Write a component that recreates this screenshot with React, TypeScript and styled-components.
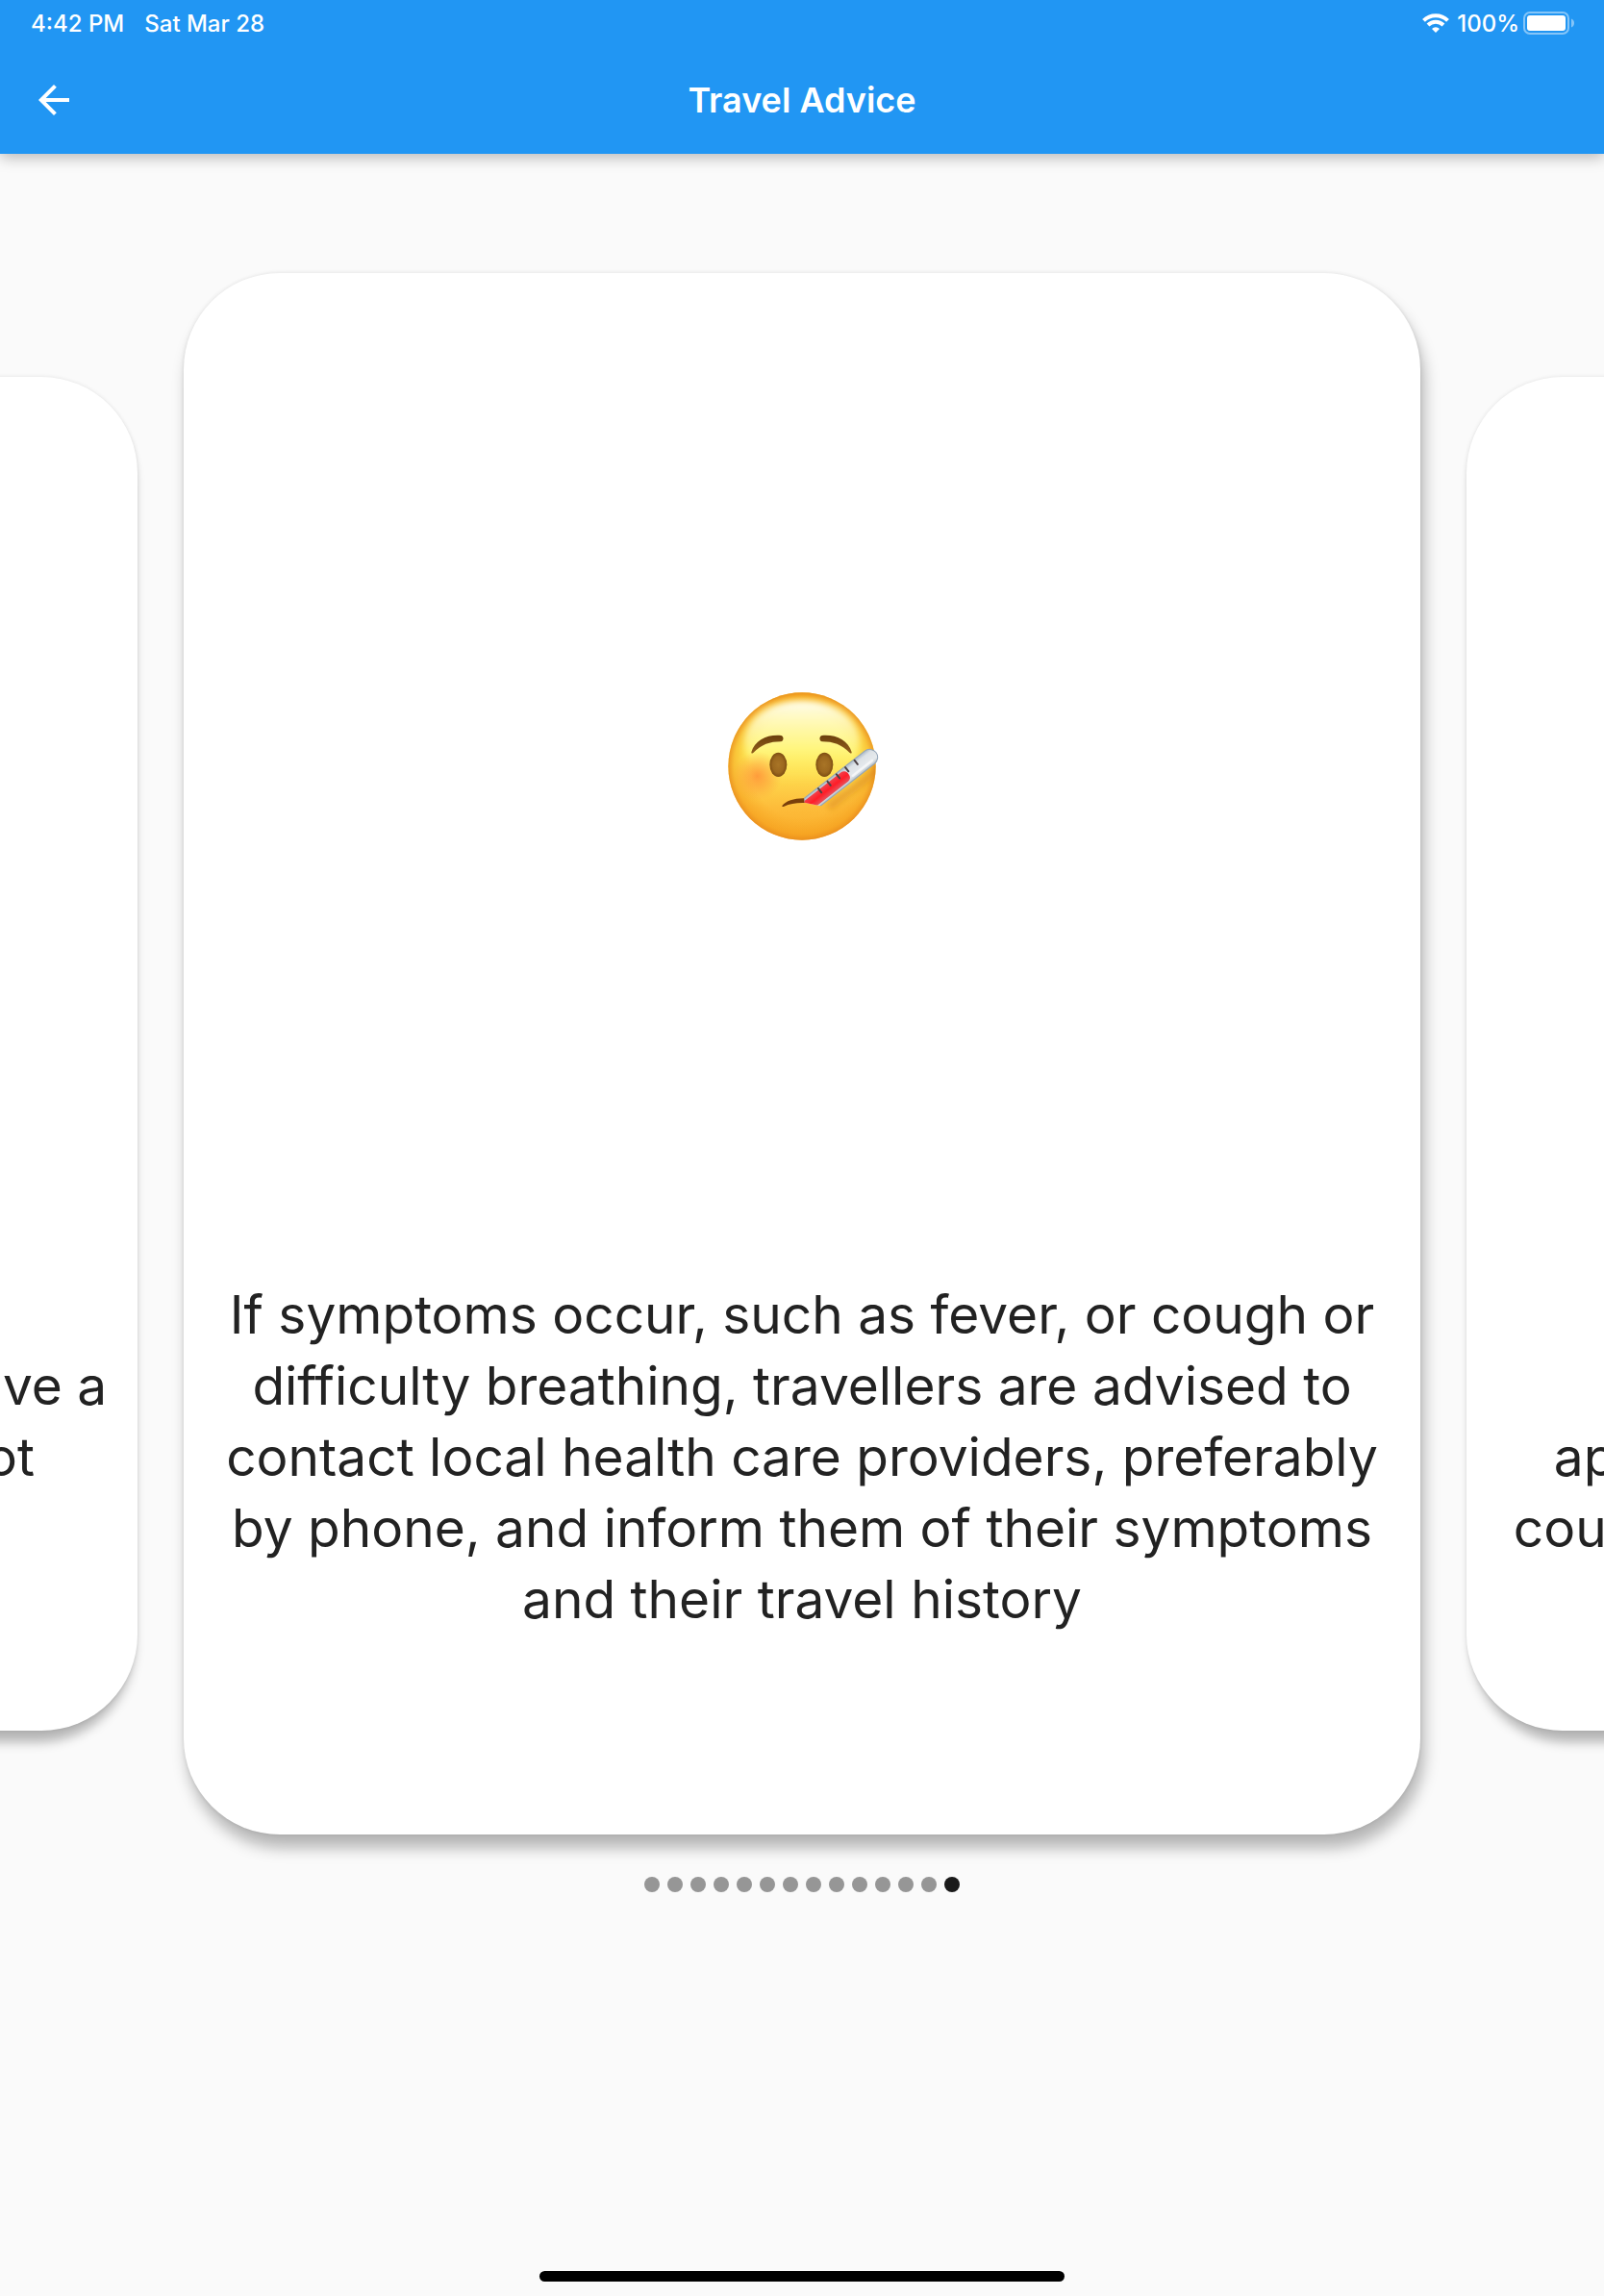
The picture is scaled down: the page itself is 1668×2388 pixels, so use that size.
import React, { useState } from "react";
import styled, { createGlobalStyle } from "styled-components";
import { MdArrowBack } from "react-icons/md";

const GlobalStyle = createGlobalStyle`
  *, *::before, *::after { box-sizing: border-box; }
  body {
    margin: 0;
    background: #fafafa;
    color: #222;
    font-family: Inter, "Liberation Sans", sans-serif;
  }
`;

const Page = styled.div`
  display: flex;
  flex-direction: column;
  min-height: 100vh;
  overflow-x: clip;
`;

const Header = styled.header`
  background: #2196f3;
  color: #fff;
  box-shadow: 0 4px 14px rgba(0, 0, 0, 0.26);
`;

const StatusBar = styled.div`
  display: flex;
  align-items: center;
  justify-content: space-between;
  height: 48px;
  padding: 0 30px 0 32px;
  font-size: 24px;
  font-weight: 500;
`;

const StatusGroup = styled.div<{ $gap: number }>`
  display: flex;
  align-items: center;
  gap: ${({ $gap }) => $gap}px;
`;

const AppBar = styled.div`
  display: grid;
  grid-template-columns: 112px 1fr 112px;
  align-items: center;
  height: 112px;
`;

const BackButton = styled.button`
  display: grid;
  place-items: center;
  width: 112px;
  height: 112px;
  padding: 0;
  border: 0;
  background: none;
  color: inherit;
  font-size: 48px;
  cursor: pointer;
`;

const Title = styled.h1`
  margin: 0;
  font-size: 36px;
  font-weight: 600;
  text-align: center;
`;

const Main = styled.main`
  display: flex;
  flex: 1;
  flex-direction: column;
  gap: 44px;
  padding-top: 124px;
`;

const Carousel = styled.section`
  display: flex;
  justify-content: center;
  gap: 48px;
  min-height: 68vh;
`;

type Side = "previous" | "current" | "next";

const shadows: Record<Side, string> = {
  previous: "-4px 12px 12px rgba(0, 0, 0, 0.28)",
  current: "4px 14px 16px rgba(0, 0, 0, 0.28)",
  next: "6px 12px 12px rgba(0, 0, 0, 0.28)",
};

const Card = styled.article<{ $side: Side }>`
  display: grid;
  flex: 0 0 calc(80% - 48px);
  grid-template-rows: 775px minmax(534px, auto);
  align-content: center;
  gap: 64px;
  margin: ${({ $side }) => ($side === "current" ? "0" : "108px 0")};
  padding: 0 24px;
  border-radius: 100px;
  background: #fff;
  box-shadow: ${({ $side }) => shadows[$side]}, 0 0 4px rgba(0, 0, 0, 0.1);
`;

const Artwork = styled.div`
  display: grid;
  place-items: center;
`;

const Advice = styled.p`
  align-self: center;
  margin: 0;
  font-size: 55px;
  line-height: 74px;
  text-align: center;
  white-space: pre-line;
`;

const Dots = styled.nav`
  display: flex;
  justify-content: center;
  gap: 8px;
`;

const Dot = styled.button<{ $active: boolean }>`
  width: 16px;
  height: 16px;
  padding: 0;
  border: 0;
  border-radius: 50%;
  background: ${({ $active }) => ($active ? "#1a1a1a" : "#969696")};
  cursor: pointer;
`;

const Footer = styled.footer`
  display: flex;
  justify-content: center;
  padding-bottom: 15px;
`;

const HomeIndicator = styled.div`
  width: 546px;
  height: 11px;
  border-radius: 6px;
  background: #000;
`;

const WifiIcon = () => (
  <svg width="28" height="20" viewBox="0 0 28 20" aria-hidden="true">
    <g fill="none" stroke="#fff" strokeWidth="4">
      <path d="M1.500 7.400a17.600 17.600 0 0 1 25 0" />
      <path d="M6 12a11.400 11.400 0 0 1 16 0" />
    </g>
    <path d="M14 20l-4-4a5.700 5.700 0 0 1 8 0z" fill="#fff" />
  </svg>
);

const BatteryIcon = () => (
  <svg width="54" height="24" viewBox="0 0 54 24" aria-hidden="true">
    <rect x="1" y="1" width="46" height="22" rx="6" fill="none" stroke="#fff" strokeOpacity=".45" strokeWidth="2" />
    <rect x="4" y="4" width="40" height="16" rx="3" fill="#fff" />
    <path d="M50 7.500c4 1.500 4 7.500 0 9z" fill="#fff" fillOpacity=".45" />
  </svg>
);

const FeverFace = () => (
  <svg width="168" height="168" viewBox="30 38 504 504" role="img" aria-label="Face with thermometer" overflow="visible">
    <defs>
      <linearGradient id="skin" x1="0" y1="0" x2="0" y2="1">
        <stop offset="0" stopColor="#fdc31f" />
        <stop offset=".1" stopColor="#fee65c" />
        <stop offset=".38" stopColor="#fff25a" />
        <stop offset=".55" stopColor="#fedc50" />
        <stop offset=".78" stopColor="#fdbc3a" />
        <stop offset="1" stopColor="#f9ac2a" />
      </linearGradient>
      <radialGradient id="rim" cx=".5" cy=".5" r=".5">
        <stop offset=".7" stopColor="#f6a31c" stopOpacity="0" />
        <stop offset=".92" stopColor="#f39a18" stopOpacity=".5" />
        <stop offset="1" stopColor="#e88a1c" stopOpacity=".85" />
      </radialGradient>
      <linearGradient id="shine" x1="0" y1="0" x2="0" y2="1">
        <stop offset="0" stopColor="#fffef0" />
        <stop offset=".5" stopColor="#fffba8" stopOpacity=".65" />
        <stop offset="1" stopColor="#fff25a" stopOpacity="0" />
      </linearGradient>
      <radialGradient id="cheek">
        <stop offset="0" stopColor="#ff8233" stopOpacity=".7" />
        <stop offset=".5" stopColor="#ff8a35" stopOpacity=".38" />
        <stop offset="1" stopColor="#ff9a3c" stopOpacity="0" />
      </radialGradient>
      <radialGradient id="eye">
        <stop offset="0" stopColor="#a87426" />
        <stop offset=".65" stopColor="#9c681f" />
        <stop offset="1" stopColor="#7d4d12" />
      </radialGradient>
      <linearGradient id="brow" x1="0" y1="0" x2="0" y2="1">
        <stop offset="0" stopColor="#6b3f0c" />
        <stop offset="1" stopColor="#935f1c" />
      </linearGradient>
      <linearGradient id="glass" x1="0" y1="0" x2="0" y2="1">
        <stop offset="0" stopColor="#b9c4cb" />
        <stop offset=".25" stopColor="#e6eaed" />
        <stop offset=".75" stopColor="#dde2e6" />
        <stop offset="1" stopColor="#a9b8c6" />
      </linearGradient>
      <linearGradient id="mercury" x1="0" y1="0" x2="0" y2="1">
        <stop offset="0" stopColor="#e8505a" />
        <stop offset=".5" stopColor="#ff1d28" />
        <stop offset="1" stopColor="#f2404a" />
      </linearGradient>
      <clipPath id="face"><circle cx="282" cy="290" r="230" /></clipPath>
      <clipPath id="mouthLine"><path d="M240 0H570V408C500 414 420 420 347 415L290 403z" /></clipPath>
      <filter id="soft" x="-20%" y="-20%" width="140%" height="140%"><feGaussianBlur stdDeviation="10" /></filter>
    </defs>
    <circle cx="282" cy="290" r="230" fill="url(#skin)" />
    <circle cx="282" cy="290" r="230" fill="url(#rim)" />
    <ellipse cx="282" cy="215" rx="180" ry="130" fill="url(#shine)" filter="url(#soft)" />
    <circle cx="143" cy="320" r="76" fill="url(#cheek)" />
    <g clipPath="url(#face)">
      <path d="M365 418L525 296" stroke="#d67f12" strokeWidth="24" strokeOpacity=".5" filter="url(#soft)" />
    </g>
    <path d="M124 246C135 208 174 190 217 194C226 197 226 211 216 213C182 213 155 222 130 248Q123 252 124 246z" fill="url(#brow)" />
    <path d="M437 246C426 208 387 190 344 194C335 197 335 211 345 213C379 213 406 222 431 248Q438 252 437 246z" fill="url(#brow)" />
    <ellipse cx="208" cy="285" rx="27" ry="38" fill="url(#eye)" />
    <ellipse cx="352" cy="285" rx="27" ry="38" fill="url(#eye)" />
    <path d="M220 413C235 394 268 386 310 391V405C275 402 248 404 226 415Q219 418 220 413z" fill="#7a3f0b" />
    <g clipPath="url(#mouthLine)">
      <g transform="translate(493 262) rotate(142)">
        <rect x="-25" y="-25" width="290" height="50" rx="25" fill="url(#glass)" stroke="#93a5b8" strokeWidth="3" />
        <rect x="84" y="-18" width="190" height="36" rx="15" fill="url(#mercury)" />
        <path d="M43 6V22M79 6V22M114 6V22M150 6V22M186 6V22" stroke="#4c4144" strokeWidth="6" strokeLinecap="round" />
        <path d="M0 -13H76" stroke="#fff" strokeWidth="8" strokeLinecap="round" strokeOpacity=".6" />
      </g>
    </g>
  </svg>
);

const slides: { side: Side; text: string }[] = [
  {
    side: "previous",
    text: "Masks are not required unless travellers have a\ncough or fever, but healthy people do not\nneed to wear one",
  },
  {
    side: "current",
    text: "If symptoms occur, such as fever, or cough or difficulty breathing, travellers are advised to contact local health care providers, preferably by phone, and inform them of their symptoms and their travel history",
  },
  {
    side: "next",
    text: "WHO advises against the\napplication of travel or trade restrictions to\ncountries which are experiencing an outbreak",
  },
];

const dotCount = 14;

export default function App() {
  const [active, setActive] = useState(dotCount - 1);

  return (
    <Page>
      <GlobalStyle />
      <Header>
        <StatusBar>
          <StatusGroup $gap={21}>
            <span>4:42 PM</span>
            <span>Sat Mar 28</span>
          </StatusGroup>
          <StatusGroup $gap={8}>
            <WifiIcon />
            <StatusGroup $gap={4}>
              <span>100%</span>
              <BatteryIcon />
            </StatusGroup>
          </StatusGroup>
        </StatusBar>
        <AppBar>
          <BackButton type="button" aria-label="Back">
            <MdArrowBack />
          </BackButton>
          <Title>Travel Advice</Title>
        </AppBar>
      </Header>
      <Main>
        <Carousel aria-label="Travel advice">
          {slides.map(({ side, text }) => (
            <Card key={side} $side={side} aria-hidden={side !== "current"}>
              <Artwork>{side === "current" && <FeverFace />}</Artwork>
              <Advice>{text}</Advice>
            </Card>
          ))}
        </Carousel>
        <Dots aria-label="Slides">
          {Array.from({ length: dotCount }, (_, i) => (
            <Dot
              key={i}
              type="button"
              $active={i === active}
              aria-label={`Slide ${i + 1}`}
              onClick={() => setActive(i)}
            />
          ))}
        </Dots>
      </Main>
      <Footer>
        <HomeIndicator />
      </Footer>
    </Page>
  );
}
